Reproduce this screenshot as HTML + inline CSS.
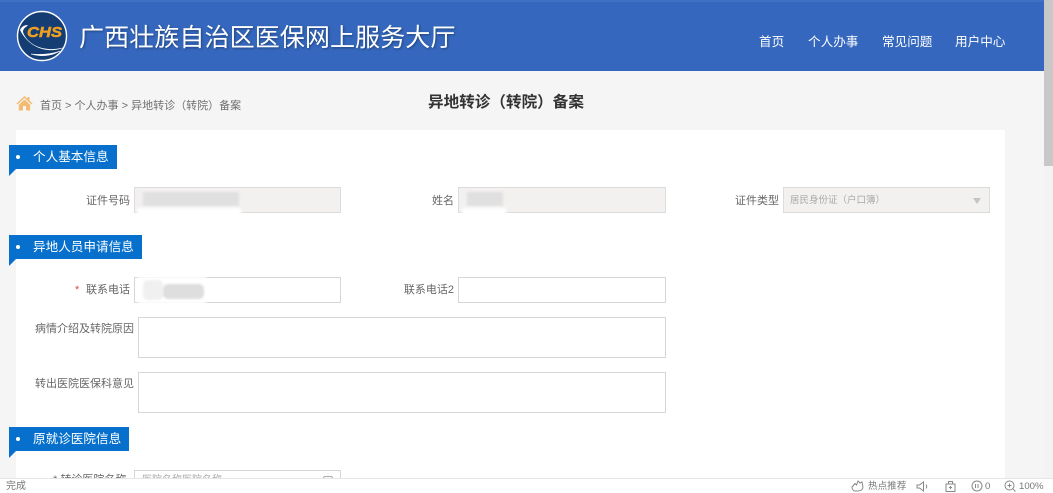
<!DOCTYPE html>
<html lang="zh-CN">
<head>
<meta charset="utf-8">
<title>异地转诊（转院）备案</title>
<style>
html,body{margin:0;padding:0;width:1053px;height:493px;overflow:hidden;background:#f5f5f5;font-family:"Liberation Sans","Noto Sans CJK SC",sans-serif;}
div,span{position:absolute;white-space:nowrap;box-sizing:border-box;}
.hdr{left:0;top:0;width:1044px;height:71px;background:#3467bd;border-top:2px solid #3e70c4;}
.title{left:79px;top:19px;font-size:25.1px;line-height:38px;color:#fff;text-shadow:1px 1px 2px rgba(0,0,0,.35);}
.nav{top:32px;font-size:12.6px;line-height:20px;color:#fff;}
.crumb{left:40px;top:98px;font-size:11px;line-height:16px;color:#707070;word-spacing:0px;}
.h1{left:428px;top:93px;font-size:15.6px;line-height:20px;font-weight:bold;color:#333;}
.card{left:16px;top:130px;width:989px;height:348px;background:#fff;}
.sec{left:9px;height:24px;background:#0670cc;color:#fff;font-size:12.6px;line-height:24px;padding-left:24px;}
.sec:before{content:"";position:absolute;left:7px;top:10px;width:4px;height:4px;border-radius:50%;background:#fff;}
.sec:after{content:"";position:absolute;left:0;top:24px;border-top:7px solid #0670cc;border-left:7px solid transparent;transform:scaleX(-1);}
.lab{font-size:11px;line-height:16px;color:#666;text-align:right;}
.inp{height:26px;border:1px solid #d6d6d6;background:#fff;}
.dis{background:#f2f1f0;border-color:#dcdcdc;}
.blur{background:#e0e0e0;filter:blur(1px);}
.halo{background:#fff;filter:blur(1.5px);}
.bar{left:0;top:478px;width:1053px;height:15px;background:#fff;border-top:1px solid #e6e6e6;}
.st{top:481px;font-size:9.6px;line-height:12px;color:#777;}
</style>
</head>
<body>
<div style="left:1044px;top:0;width:9px;height:493px;background:#f3f3f3"></div>
<div style="left:1044px;top:0;width:9px;height:166px;background:#c8c8c8"></div>

<div class="hdr"></div>
<svg style="position:absolute;left:16px;top:10px" width="52" height="52" viewBox="0 0 52 52">
  <circle cx="26" cy="26" r="24.5" fill="#143d73" stroke="#fff" stroke-width="1.4"/>
  <path d="M4 20C6 16 9 15 12 15L10 17C8 18 7 20 7 22C10 32 25 44 49 37C38 43 15 42 4 20Z" fill="#fff"/>
  <path d="M15 44C25 47 36 46 44 41C36 44 26 45 15 44Z" fill="#fff" stroke="#fff" stroke-width=".5"/>
  <text x="11" y="27" font-family="Liberation Sans" font-size="15" font-weight="bold" font-style="italic" fill="#f0a020" stroke="#f0a020" stroke-width=".5" textLength="35" lengthAdjust="spacingAndGlyphs">CHS</text>
</svg>
<div class="title">广西壮族自治区医保网上服务大厅</div>
<div class="nav" style="left:759px">首页</div>
<div class="nav" style="left:808px">个人办事</div>
<div class="nav" style="left:882px">常见问题</div>
<div class="nav" style="left:955px">用户中心</div>

<svg style="position:absolute;left:16px;top:95px" width="17" height="16" viewBox="0 0 17 16">
  <path d="M8.5 1L0.5 8.5L1.5 9.5L8.5 3L15.5 9.5L16.5 8.5L13.5 5.6V2H11.5V3.8Z" fill="#f3bb72"/>
  <path d="M8.5 4.5L2.8 9.8V15.5H7V11H10V15.5H14.2V9.8Z" fill="#f3bb72"/>
</svg>
<div class="crumb">首页 &gt; 个人办事 &gt; 异地转诊（转院）备案</div>
<div class="h1">异地转诊（转院）备案</div>

<div class="card"></div>

<div class="sec" style="top:145px;width:108px">个人基本信息</div>
<div class="lab" style="left:60px;top:193px;width:70px">证件号码</div>
<div class="inp dis" style="left:134px;top:187px;width:207px"></div>
<div class="blur" style="left:143px;top:192px;width:96px;height:14px"></div>
<div class="halo" style="left:137px;top:208px;width:104px;height:8px"></div>
<div class="lab" style="left:384px;top:193px;width:70px">姓名</div>
<div class="inp dis" style="left:458px;top:187px;width:208px"></div>
<div class="blur" style="left:467px;top:192px;width:36px;height:14px"></div>
<div class="halo" style="left:462px;top:208px;width:44px;height:8px"></div>
<div class="lab" style="left:709px;top:193px;width:70px">证件类型</div>
<div class="inp dis" style="left:783px;top:187px;width:207px"></div>
<div style="left:790px;top:194px;font-size:9.5px;line-height:14px;color:#a8a8a8">居民身份证（户口簿）</div>
<div style="left:973px;top:198px;width:0;height:0;border-left:4px solid transparent;border-right:4px solid transparent;border-top:6px solid #c4c4c4"></div>

<div class="sec" style="top:235px;width:133px">异地人员申请信息</div>
<div style="left:75px;top:282px;font-size:11px;line-height:16px;color:#e0474c">*</div>
<div class="lab" style="left:60px;top:282px;width:70px">联系电话</div>
<div class="inp" style="left:134px;top:277px;width:207px"></div>
<div class="halo" style="left:138px;top:276px;width:68px;height:28px"></div>
<div class="blur" style="left:143px;top:280px;width:20px;height:20px;background:#f0f0f0;border-radius:5px"></div>
<div class="blur" style="left:163px;top:284px;width:41px;height:15px;background:#dedede;border-radius:5px"></div>
<div class="lab" style="left:384px;top:282px;width:70px">联系电话2</div>
<div class="inp" style="left:458px;top:277px;width:208px"></div>
<div class="lab" style="left:20px;top:321px;width:114px">病情介绍及转院原因</div>
<div class="inp" style="left:138px;top:317px;width:528px;height:41px"></div>
<div class="lab" style="left:20px;top:376px;width:114px">转出医院医保科意见</div>
<div class="inp" style="left:138px;top:372px;width:528px;height:41px"></div>

<div class="sec" style="top:427px;width:120px">原就诊医院信息</div>
<div style="left:53px;top:472px;height:6px;overflow:hidden;font-size:11px;line-height:16px;color:#666">* 转诊医院名称</div>
<div class="inp" style="left:134px;top:470px;width:207px;height:8px;border-bottom:0"></div>
<div style="left:142px;top:474px;height:4px;overflow:hidden;font-size:10px;line-height:14px;color:#aaa">医院名称医院名称</div>
<div style="left:323px;top:476px;width:10px;height:2px;border:1px solid #aaa;border-bottom:0;border-radius:5px 5px 0 0"></div>

<div class="bar"></div>
<div class="st" style="left:6px;font-size:10px">完成</div>
<svg style="position:absolute;left:851px;top:480px" width="13" height="12" viewBox="0 0 13 12" fill="none" stroke="#888">
  <path d="M1 7L4 3.5L5.5 5L7 1L9 3L11 2L12 7C12 9 10 11 7 11H4C2 11 1 9 1 7Z"/>
</svg>
<div class="st" style="left:868px">热点推荐</div>
<svg style="position:absolute;left:916px;top:481px" width="14" height="11" viewBox="0 0 14 11" fill="none" stroke="#888">
  <path d="M1 4H3.5L7.5 1V10L3.5 7H1Z"/><path d="M10 3.5Q11.5 5.5 10 7.5"/>
</svg>
<svg style="position:absolute;left:945px;top:480px" width="11" height="12" viewBox="0 0 11 12" fill="none" stroke="#888">
  <rect x="1" y="4" width="9" height="7.5"/><path d="M3.5 4V1.5H7.5V4"/><path d="M4 7.5H7M5.5 6V9"/>
</svg>
<svg style="position:absolute;left:971px;top:480px" width="12" height="12" viewBox="0 0 12 12" fill="none" stroke="#888">
  <circle cx="6" cy="6" r="5"/><path d="M4.5 4V8M7 4V8"/>
</svg>
<div class="st" style="left:985px">0</div>
<svg style="position:absolute;left:1004px;top:480px" width="12" height="12" viewBox="0 0 12 12" fill="none" stroke="#888">
  <circle cx="5.5" cy="5.5" r="4.5"/><path d="M3.5 5.5H7.5M5.5 3.5V7.5M9 9L11.5 11.5"/>
</svg>
<div class="st" style="left:1019px">100%</div>
</body>
</html>
